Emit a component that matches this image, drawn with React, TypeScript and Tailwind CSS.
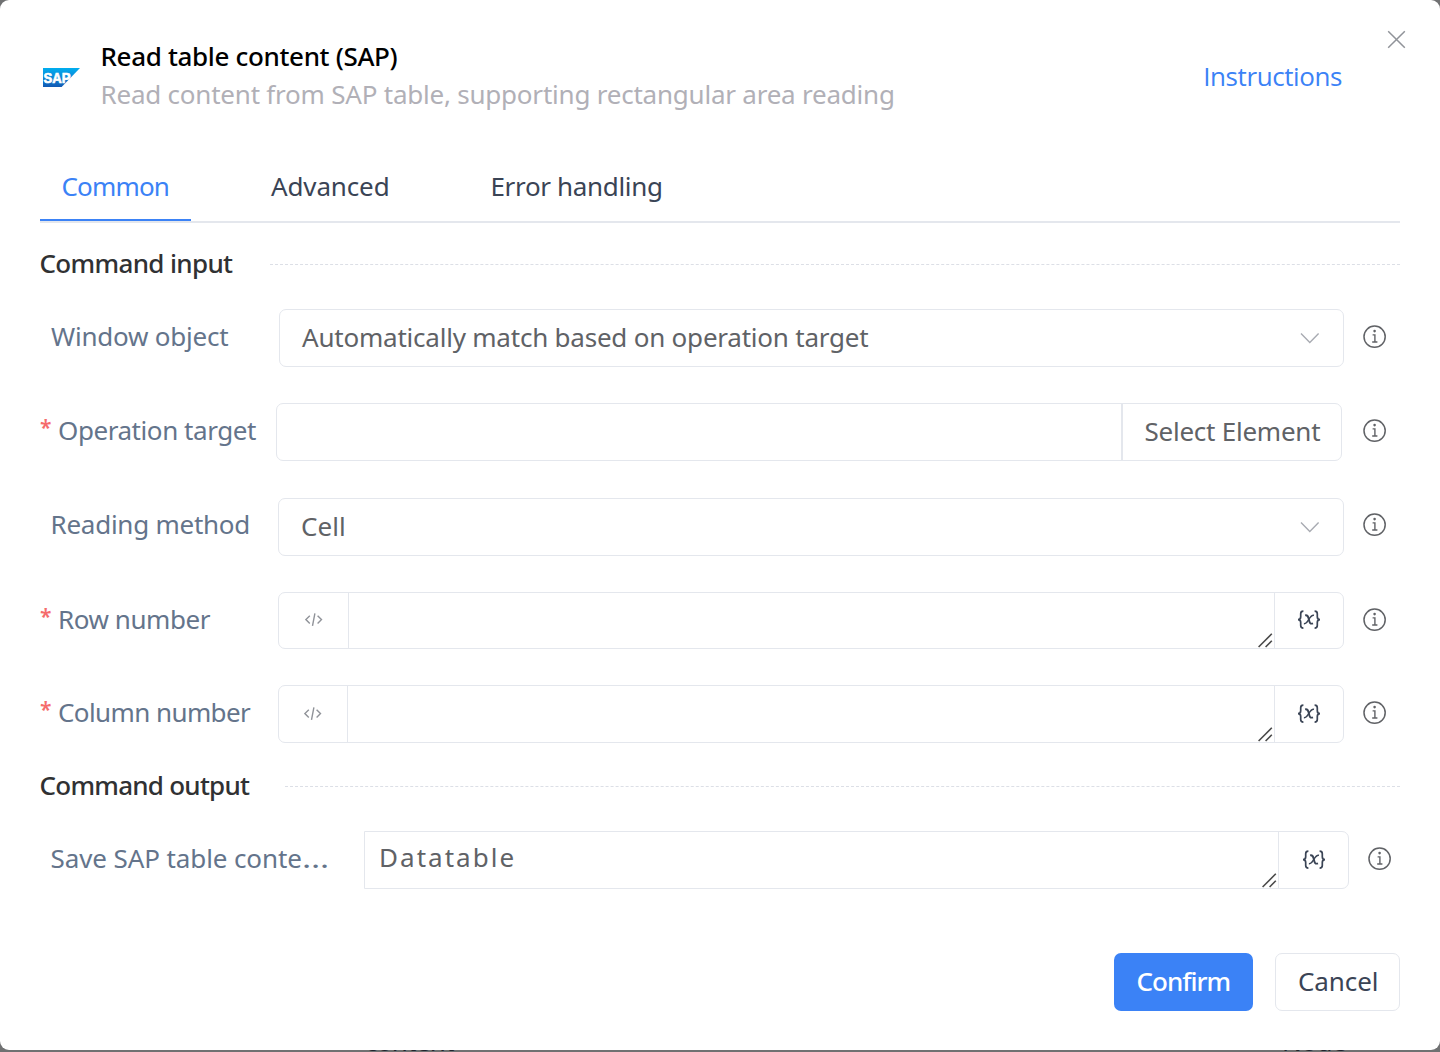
import type { ReactNode } from 'react'

function SapLogo() {
  return (
    <svg width="37" height="19" viewBox="0 0 37 19" className="block">
      <defs>
        <linearGradient id="sapBlue" x1="0" y1="0" x2="0" y2="1">
          <stop offset="0" stopColor="#00aeef" />
          <stop offset="0.5" stopColor="#0d86d6" />
          <stop offset="1" stopColor="#1259b3" />
        </linearGradient>
      </defs>
      <path d="M0 0H37L18.6 19H0Z" fill="url(#sapBlue)" />
      <text
        x="0.6"
        y="14.8"
        textLength="27"
        lengthAdjust="spacingAndGlyphs"
        fill="#fff"
        stroke="#fff"
        strokeWidth="0.7"
        fontFamily="Liberation Sans, sans-serif"
        fontWeight="700"
        fontSize="15"
      >
        SAP
      </text>
    </svg>
  )
}

function InfoIcon() {
  return (
    <svg width="24" height="24" viewBox="0 0 24 24" fill="none" stroke="#606266" className="block shrink-0">
      <circle cx="11.6" cy="11.7" r="10.6" strokeWidth="1.5" />
      <circle cx="11.6" cy="6.1" r="1.3" fill="#606266" stroke="none" />
      <path d="M9.6 9.9H11.9V17M9.2 17H14.4" strokeWidth="1.4" />
    </svg>
  )
}

function ChevronIcon() {
  return (
    <svg width="20" height="12" viewBox="0 0 20 12" fill="none" stroke="#a8abb2" strokeWidth="1.4" className="block shrink-0">
      <path d="M1 1.6L9.8 10.4L18.6 1.6" />
    </svg>
  )
}

function CodeIcon() {
  return (
    <svg width="18" height="14" viewBox="0 0 18 14" fill="none" stroke="#909399" strokeWidth="1.4" className="block">
      <path d="M4.8 2.7L0.9 6.6L4.8 10.5M12.6 2.7L16.5 6.6L12.6 10.5M9.9 0.3L7.5 12.9" />
    </svg>
  )
}

function VariableIcon() {
  return (
    <svg width="24" height="20" viewBox="0 0 24 20" fill="none" stroke="#3a4455" strokeWidth="1.7" className="block">
      <path d="M6.4 1.2C4 1.2 3.7 2 3.7 3.8V6.8C3.7 8.6 3 9.7 1 9.7C3 9.7 3.7 10.8 3.7 12.6V15.6C3.7 17.4 4 18.2 6.4 18.2" />
      <path d="M17.6 1.2C20 1.2 20.3 2 20.3 3.8V6.8C20.3 8.6 21 9.7 23 9.7C21 9.7 20.3 10.8 20.3 12.6V15.6C20.3 17.4 20 18.2 17.6 18.2" />
      <path d="M8.1 5.4C10.4 4.8 10.9 6 11.4 7.8L12.5 11.8C13 13.6 14 14.1 16 13.3" strokeWidth="1.9" />
      <path d="M17 5.3C14.8 4.9 13.6 6.5 11.9 9.3C10.2 12.2 9.2 14.1 6.9 13.6" strokeWidth="1.5" />
    </svg>
  )
}

function ResizeGrip() {
  return (
    <svg width="15" height="15" viewBox="0 0 15 15" stroke="#4a4a4a" strokeWidth="1.6" className="block">
      <path d="M0.6 14L13.8 0.8M7.6 14L13.8 7.8" />
    </svg>
  )
}

type SectionTitleProps = { children: ReactNode; className: string; heading: string; rule: string }

function SectionTitle({ children, className, heading, rule }: SectionTitleProps) {
  return (
    <div className={`flex h-9 items-center ${className}`}>
      <h3 className={`mr-[0.5px] -ml-[0.5px] shrink-0 font-medium whitespace-nowrap text-[#303133] ${heading}`}>
        {children}
      </h3>
      <div className={`h-px flex-1 border-t border-dashed border-[#dcdfe6] ${rule}`} />
    </div>
  )
}

type LabelProps = { text: ReactNode; required?: boolean; className: string; spacing: string }

function Label({ text, required, className, spacing }: LabelProps) {
  return (
    <div className={`flex h-9 shrink-0 items-center whitespace-nowrap text-[#64748b] ${className}`}>
      {required ? (
        <span className="w-[18px] pb-[7px] text-[21px] font-semibold text-[#f56c6c]">*</span>
      ) : (
        <span className="w-[10px]" />
      )}
      <span className={spacing}>{text}</span>
    </div>
  )
}

function SelectBox({ text, className, spacing }: { text: string; className: string; spacing: string }) {
  return (
    <div className={`flex h-[58px] items-center justify-between rounded-[7px] border border-[#e4e7ed] pr-[23px] pl-[22px] text-[#606266] ${className}`}>
      <span className={`pb-[2px] ${spacing}`}>{text}</span>
      <ChevronIcon />
    </div>
  )
}

function ExpressionInput({ className, prefix }: { className: string; prefix: string }) {
  return (
    <div className={`flex w-[1066px] rounded-[7px] border border-[#e4e7ed] ${className}`}>
      <div className={`flex items-center justify-center border-r border-[#e4e7ed] pb-px ${prefix}`}>
        <CodeIcon />
      </div>
      <div className="flex flex-1 items-end justify-end pr-px">
        <ResizeGrip />
      </div>
      <div className="flex w-[69px] items-center justify-center border-l border-[#e4e7ed] pb-px">
        <VariableIcon />
      </div>
    </div>
  )
}

export default function App() {
  return (
    <div className="relative h-[1052px] w-[1440px] overflow-hidden bg-[#707172] text-[26px] leading-9 font-[Noto_Sans,sans-serif]">
      <span aria-hidden="true" className="absolute top-[1023px] left-[365px] tracking-[-0.7px] text-[#20252e]">content</span>
      <span aria-hidden="true" className="absolute top-[1023px] left-[1282px] tracking-[-0.5px] text-[#20252e]">Node</span>

      <main className="relative flex h-[1050px] flex-col rounded-[9px] bg-white px-10 pt-[38px]">
        <button aria-label="Close" className="absolute top-[30px] right-[34px]">
          <svg width="19" height="19" viewBox="0 0 19 19" stroke="#909399" strokeWidth="1.5" className="block">
            <path d="M1.2 1.2L17.8 17.8M17.8 1.2L1.2 17.8" />
          </svg>
        </button>

        <header className="flex h-[76px] items-center">
          <div className="ml-[3px] w-[57.5px] pt-[2px]">
            <SapLogo />
          </div>
          <div className="flex-1 whitespace-nowrap">
            <h2 className="h-[38px] font-medium tracking-[-0.34px] text-black">Read table content (SAP)</h2>
            <p className="h-[38px] tracking-[-0.22px] text-[#b1b0b7]">
              Read content from SAP table, supporting rectangular area reading
            </p>
          </div>
          <a className="mr-[58px] font-[Open_Sans,sans-serif] tracking-[-0.41px] text-[#3b82f6]">Instructions</a>
        </header>

        <nav className="mt-[39px] flex h-[70px] border-b-2 border-[#e4e7ed] text-[#3a4455]">
          <div className="mr-20 h-[68px] w-[151px] border-b-2 border-[#3b82f6] pt-[15px] pl-[21.5px] tracking-[-0.84px] text-[#3b82f6]">
            Common
          </div>
          <div className="w-[219.5px] pt-[15px] tracking-[-0.14px]">Advanced</div>
          <div className="pt-[15px] tracking-[-0.34px]">Error handling</div>
        </nav>

        <SectionTitle className="mt-[22px]" heading="w-[230px] tracking-[-0.66px]" rule="mt-[2px]">
          Command input
        </SectionTitle>

        <div className="mt-[28px] flex h-[58px] items-start">
          <Label text="Window object" className="mt-[9px] w-[239px] pl-px" spacing="tracking-[-0.22px]" />
          <SelectBox
            text="Automatically match based on operation target"
            className="w-[1065px]"
            spacing="tracking-[-0.217px]"
          />
          <div className="mt-[16px] ml-[19px]">
            <InfoIcon />
          </div>
        </div>

        <div className="mt-[36px] flex h-[58px] items-start">
          <Label text="Operation target" required className="mt-[9px] w-[236px]" spacing="tracking-[-0.43px]" />
          <div className="flex h-[58px] w-[1066px] rounded-[7px] border border-[#e4e7ed]">
            <div className="flex-1" />
            <div className="flex w-[220px] items-center border-l-2 border-[#e4e7ed] pb-[2px] pl-[21.5px] tracking-[-0.24px] whitespace-nowrap text-[#606266]">
              Select Element
            </div>
          </div>
          <div className="mt-[16px] ml-[21px]">
            <InfoIcon />
          </div>
        </div>

        <div className="mt-[37px] flex h-[58px] items-start">
          <Label text="Reading method" className="mt-[8px] w-[238px] pl-[0.5px]" spacing="tracking-[-0.25px]" />
          <SelectBox text="Cell" className="w-[1066px]" spacing="tracking-[0.1px]" />
          <div className="mt-[15px] ml-[19px]">
            <InfoIcon />
          </div>
        </div>

        <div className="mt-[36px] flex h-[57px] items-start">
          <Label text="Row number" required className="mt-[9px] w-[238px]" spacing="tracking-[-0.44px]" />
          <ExpressionInput className="h-[57px]" prefix="w-[70px]" />
          <div className="mt-[16px] ml-[19px]">
            <InfoIcon />
          </div>
        </div>

        <div className="mt-[36px] flex h-[58px] items-start">
          <Label text="Column number" required className="mt-[9px] w-[238px]" spacing="tracking-[-0.59px]" />
          <ExpressionInput className="h-[58px]" prefix="w-[69px]" />
          <div className="mt-[16px] ml-[19px]">
            <InfoIcon />
          </div>
        </div>

        <SectionTitle className="mt-[25px]" heading="w-[245px] pb-[2px] tracking-[-0.75px]" rule="mt-0">
          Command output
        </SectionTitle>

        <div className="mt-[27px] flex h-[58px] items-start">
          <Label
            text={
              <>
                Save SAP table conte<span className="inline-block origin-left scale-x-[1.32]">…</span>
              </>
            }
            className="mt-[9px] w-[324px] pl-[0.5px]"
            spacing="tracking-[-0.1px]"
          />
          <div className="flex h-[58px] w-[985px] rounded-r-[7px] border border-[#e4e7ed]">
            <div className="flex flex-1 justify-between pl-[14px] text-[#606266]">
              <span className="mt-[7px] tracking-[2.03px]">Datatable</span>
              <span className="self-end pr-px">
                <ResizeGrip />
              </span>
            </div>
            <div className="flex w-[70px] items-center justify-center border-l border-[#e4e7ed] pb-px">
              <VariableIcon />
            </div>
          </div>
          <div className="mt-[16px] ml-[19px]">
            <InfoIcon />
          </div>
        </div>

        <footer className="mt-[64px] flex justify-end gap-[22px]">
          <button className="h-[58px] w-[139px] rounded-[7px] bg-[#3b82f6] pb-[2px] pl-[22.5px] text-left font-medium tracking-[-1px] text-white">
            Confirm
          </button>
          <button className="h-[58px] w-[125px] rounded-[7px] border border-[#e4e7ed] pb-[2px] pl-[22px] text-left tracking-[-0.1px] text-[#3a4455]">
            Cancel
          </button>
        </footer>
      </main>
    </div>
  )
}
